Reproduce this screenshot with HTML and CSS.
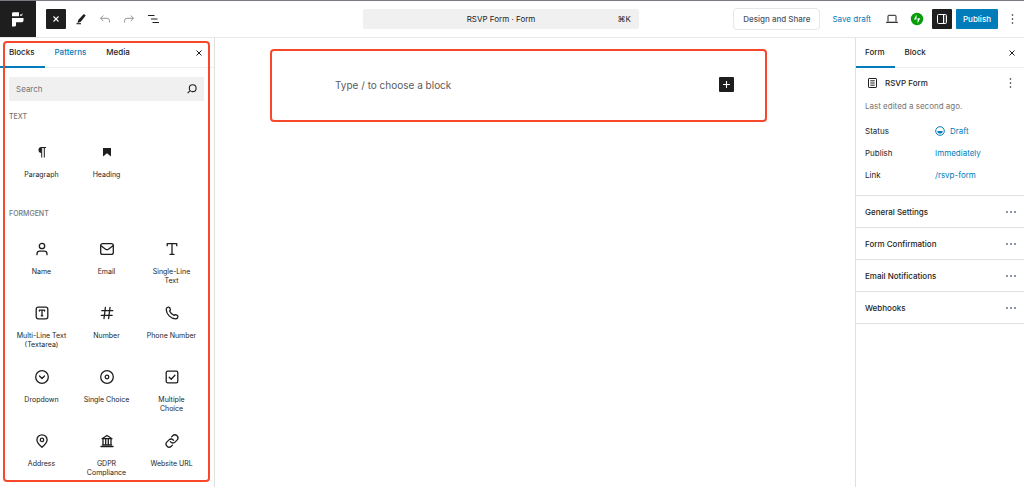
FILE: index.html
```
<!DOCTYPE html>
<html lang="en">
<head>
  <meta charset="UTF-8">
  <meta name="viewport" content="width=device-width, initial-scale=1.0">
  <title>RSVP Form</title>
  <link rel="stylesheet" href="styles.css">
</head>
<body>
  <header class="topbar">
    <div class="topbar-left">
      <a class="logo" href="#" aria-label="Dashboard">
        <svg width="36" height="36" viewBox="0 0 36 36" fill="#fff"><path d="M13.200 11.200h5.800v4h-7v-2.800a1.200 1.200 0 0 1 1.200-1.200zM12 17h11.500v2.600a1.600 1.600 0 0 1-1.600 1.600H16v3a1.400 1.400 0 0 1-1.400 1.400H12zM20 13.200l1.200.6 1.600-1.600-.600 2-1 .8-1.200-.6z"/></svg>
      </a>
      <button class="square-btn close-inserter" type="button" aria-label="Close inserter">
        <svg width="14" height="14" viewBox="0 0 14 14" fill="none" stroke="currentColor" stroke-width="1.1"><path d="M4.500 4.500l5 5M9.500 4.500l-5 5"/></svg>
      </button>
      <button class="tool-btn" type="button" aria-label="Tools">
        <svg width="14" height="14" viewBox="0 0 14 14"><path d="M9.800 2l1.900 1.600-4.900 6.200-3.300 1.200.9-3.200z" fill="#1e1e1e"/><path d="M2.500 11.700h4.500" stroke="#1e1e1e" stroke-width="1.100"/></svg>
      </button>
      <button class="tool-btn muted" type="button" aria-label="Undo">
        <svg width="14" height="14" viewBox="0 0 14 14" fill="none" stroke="currentColor"><path d="M5.300 3.500L2.500 6.300l2.800 2.800M2.500 6.300h6.300q2.700 0 2.700 2.400v1.800"/></svg>
      </button>
      <button class="tool-btn muted" type="button" aria-label="Redo">
        <svg width="14" height="14" viewBox="0 0 14 14" fill="none" stroke="currentColor"><path d="M8.700 3.500l2.800 2.800-2.800 2.800M11.500 6.300H5.200q-2.700 0-2.700 2.400v1.800"/></svg>
      </button>
      <button class="tool-btn" type="button" aria-label="Document overview">
        <svg width="14" height="14" viewBox="0 0 14 14" fill="none" stroke="#1e1e1e" stroke-width="1.100"><path d="M2 3.500h6.500M5 7h6.500M6.500 10.500h6.500"/></svg>
      </button>
    </div>
    <button class="command-bar" type="button">
      <span></span>
      <span>RSVP Form · Form</span>
      <span class="shortcut">⌘K</span>
    </button>
    <div class="topbar-right">
      <button class="design-btn" type="button">Design and Share</button>
      <button class="save-btn" type="button">Save draft</button>
      <button class="tool-btn" type="button" aria-label="Preview">
        <svg width="14" height="14" viewBox="0 0 14 14" fill="none" stroke="#1e1e1e"><path d="M3 9.500V4q0-.7.700-.7h6.600q.7 0 .7.700v5.500"/><path d="M1.200 10.300h11.600" stroke-width="1.200"/></svg>
      </button>
      <button class="tool-btn" type="button" aria-label="Jetpack">
        <svg width="14" height="14" viewBox="0 0 14 14"><circle cx="7" cy="7" r="6.200" fill="#069e08"/><path d="M6.500 2.400v5.200H3.900zM7.600 11.500V6.300h2.600z" fill="#fff"/></svg>
      </button>
      <button class="square-btn" type="button" aria-label="Settings">
        <svg width="14" height="14" viewBox="0 0 14 14" fill="none" stroke="#fff"><rect x="2.500" y="2.500" width="9" height="9" rx="1"/><path d="M8.500 2.500v9"/><path d="M10 3v8" stroke-opacity=".4"/></svg>
      </button>
      <button class="publish-btn" type="button">Publish</button>
      <button class="tool-btn" type="button" aria-label="Options">
        <svg width="14" height="14" viewBox="0 0 14 14" fill="#1e1e1e"><circle cx="7.500" cy="3" r=".8"/><circle cx="7.500" cy="7" r=".8"/><circle cx="7.500" cy="11" r=".8"/></svg>
      </button>
    </div>
  </header>

  <div class="editor">
    <aside class="inserter">
      <div class="tabs">
        <button class="tab active" type="button">Blocks</button>
        <button class="tab blue" type="button">Patterns</button>
        <button class="tab" type="button">Media</button>
        <button class="tool-btn tabs-close" type="button" aria-label="Close">
          <svg width="14" height="14" viewBox="0 0 14 14" fill="none" stroke="#1e1e1e"><path d="M4.500 4.500l5 5M9.500 4.500l-5 5"/></svg>
        </button>
      </div>
      <div class="inserter-body">
        <div class="search">
          <input type="search" placeholder="Search" aria-label="Search">
          <svg width="12" height="12" viewBox="0 0 12 12" fill="none" stroke="#1e1e1e" stroke-width="1.100"><circle cx="6.700" cy="5.200" r="3.400"/><path d="M4.200 7.700L1.600 10.200"/></svg>
        </div>

        <h2 class="group-title">TEXT</h2>
        <div class="blocks">
          <button class="block" type="button">
            <svg width="16" height="16" viewBox="0 0 16 16"><path d="M7.500 3a3 3 0 0 0 0 6z" fill="#1e1e1e"/><path d="M7 3.500h5M7.700 3.500v10M10.300 3.500v10" stroke="#1e1e1e" fill="none"/></svg>
            <span>Paragraph</span>
          </button>
          <button class="block" type="button">
            <svg width="16" height="16" viewBox="0 0 16 16" fill="#1e1e1e"><path d="M4 4h8v8.500L8 9.300l-4 3.200z"/></svg>
            <span>Heading</span>
          </button>
        </div>

        <h2 class="group-title">FORMGENT</h2>
        <div class="blocks">
          <button class="block" type="button">
            <svg class="line" width="16" height="16" viewBox="0 0 16 16"><circle cx="8" cy="5" r="2.700"/><path d="M3 13.700v-.8q0-2.700 2.700-2.700h4.600q2.700 0 2.700 2.700v.8"/></svg>
            <span>Name</span>
          </button>
          <button class="block" type="button">
            <svg class="line" width="16" height="16" viewBox="0 0 16 16"><rect x="1.700" y="2.600" width="12.600" height="10.800" rx="2"/><path d="M2 4.800l4.600 3.400q1.400 1 2.800 0L14 4.800"/></svg>
            <span>Email</span>
          </button>
          <button class="block" type="button">
            <svg class="line" width="16" height="16" viewBox="0 0 16 16"><path d="M3.200 4.800V2.700h9.600v2.100M8 2.700v10.600M6 13.300h4"/></svg>
            <span>Single-Line Text</span>
          </button>
          <button class="block" type="button">
            <svg class="line" width="16" height="16" viewBox="0 0 16 16"><rect x="2.200" y="2.200" width="11.600" height="11.600" rx="2"/><path d="M5.400 6V5.200h5.200V6M8 5.200v5.600M7.200 10.800h1.600"/></svg>
            <span>Multi-Line Text (Textarea)</span>
          </button>
          <button class="block" type="button">
            <svg class="line" width="16" height="16" viewBox="0 0 16 16"><path d="M2.800 5.700h11M2.200 10.300h11M6.400 2.500L5 13.500M11 2.500L9.600 13.500"/></svg>
            <span>Number</span>
          </button>
          <button class="block" type="button">
            <svg class="line" width="16" height="16" viewBox="0 0 16 16"><path d="M5.600 5.900a9 9 0 0 0 4.500 4.500q.7-.9 1.400-.8l1.800.7q.8.5.6 1.500-.4 2-2.100 2A10 10 0 0 1 2.200 4.200q0-1.700 2-2.100 1-.2 1.500.6l.7 1.800q.1.700-.8 1.400z"/></svg>
            <span>Phone Number</span>
          </button>
          <button class="block" type="button">
            <svg class="line" width="16" height="16" viewBox="0 0 16 16"><circle cx="8" cy="8" r="6.300"/><path d="M5.500 7L8 9.500 10.500 7"/></svg>
            <span>Dropdown</span>
          </button>
          <button class="block" type="button">
            <svg class="line" width="16" height="16" viewBox="0 0 16 16"><circle cx="8" cy="8" r="6.300"/><circle cx="8" cy="8" r="1.800"/></svg>
            <span>Single Choice</span>
          </button>
          <button class="block" type="button">
            <svg class="line" width="16" height="16" viewBox="0 0 16 16"><rect x="2.200" y="2.200" width="11.600" height="11.600" rx="1.600"/><path d="M5.200 8.200l2 2 3.700-4"/></svg>
            <span>Multiple Choice</span>
          </button>
          <button class="block" type="button">
            <svg class="line" width="16" height="16" viewBox="0 0 16 16"><path d="M8 14.300C5.600 12.100 2.900 9.900 2.900 6.900a5.100 5.100 0 0 1 10.200 0c0 3-2.700 5.200-5.100 7.400z"/><circle cx="8" cy="6.900" r="1.700"/></svg>
            <span>Address</span>
          </button>
          <button class="block" type="button">
            <svg class="line" width="16" height="16" viewBox="0 0 16 16"><path d="M2 13.500h12M3.500 11.800h9M3 5.700h10L8 2.500z"/><path d="M4 6v5.500M6.700 6v5.500M9.300 6v5.500M12 6v5.500"/></svg>
            <span>GDPR Compliance</span>
          </button>
          <button class="block" type="button">
            <svg class="line" width="16" height="16" viewBox="0 0 16 16"><path d="M6.400 8.700a3 3 0 0 0 4.600.4l2-2a3 3 0 0 0-4.300-4.300L7.600 3.900"/><path d="M9.600 7.300a3 3 0 0 0-4.600-.4l-2 2a3 3 0 0 0 4.300 4.300l1.100-1.100"/></svg>
            <span>Website URL</span>
          </button>
        </div>
      </div>
      <div class="highlight"></div>
    </aside>

    <main class="canvas">
      <div class="empty-block">
        <p>Type / to choose a block</p>
        <button class="add-btn" type="button" aria-label="Add block">
          <svg width="15" height="15" viewBox="0 0 15 15" stroke="#fff" stroke-width="1.100"><path d="M7.500 4v7M4 7.500h7"/></svg>
        </button>
      </div>
    </main>

    <aside class="settings">
      <div class="tabs">
        <button class="tab active" type="button">Form</button>
        <button class="tab" type="button">Block</button>
        <button class="tool-btn tabs-close" type="button" aria-label="Close settings">
          <svg width="14" height="14" viewBox="0 0 14 14" fill="none" stroke="#1e1e1e"><path d="M4.500 4.500l5 5M9.500 4.500l-5 5"/></svg>
        </button>
      </div>
      <section class="summary">
        <div class="summary-head">
          <svg width="14" height="14" viewBox="0 0 14 14" fill="none" stroke="#1e1e1e"><rect x="3.500" y="2.500" width="8" height="9" rx=".6"/><path d="M5.300 4.800h4.400M5.300 7h4.400M5.300 9.200h4.400"/></svg>
          <h2>RSVP Form</h2>
          <button class="tool-btn" type="button" aria-label="Actions">
            <svg width="14" height="14" viewBox="0 0 14 14" fill="#1e1e1e"><circle cx="7.500" cy="3" r=".8"/><circle cx="7.500" cy="7" r=".8"/><circle cx="7.500" cy="11" r=".8"/></svg>
          </button>
        </div>
        <p class="edited">Last edited a second ago.</p>
        <div class="row">
          <span>Status</span>
          <button class="value" type="button">
            <svg width="10" height="10" viewBox="0 0 10 10"><circle cx="5" cy="5" r="4.300" fill="none" stroke="#007cba"/><path d="M2.400 5h5.200a2.600 2.600 0 0 1-5.200 0z" fill="#007cba"/></svg>
            Draft
          </button>
        </div>
        <div class="row">
          <span>Publish</span>
          <button class="value" type="button">Immediately</button>
        </div>
        <div class="row">
          <span>Link</span>
          <a class="value" href="#">/rsvp-form</a>
        </div>
      </section>
      <button class="panel" type="button">General Settings <span class="dots"><i></i><i></i><i></i></span></button>
      <button class="panel" type="button">Form Confirmation <span class="dots"><i></i><i></i><i></i></span></button>
      <button class="panel" type="button">Email Notifications <span class="dots"><i></i><i></i><i></i></span></button>
      <button class="panel" type="button">Webhooks <span class="dots"><i></i><i></i><i></i></span></button>
    </aside>
  </div>
</body>
</html>
```
FILE: styles.css
```
* {
  box-sizing: border-box;
}

body {
  margin: 0;
  height: 100vh;
  display: flex;
  flex-direction: column;
  overflow: hidden;
  background: #fff;
  color: #1e1e1e;
  font-family: Inter, "Liberation Sans", sans-serif;
  font-size: 8px;
  line-height: 12px;
}

button,
input {
  font: inherit;
  color: inherit;
  margin: 0;
  padding: 0;
  border: none;
  background: none;
}

button {
  cursor: pointer;
}

h2,
p {
  margin: 0;
  font-size: 8px;
  font-weight: 500;
}

svg {
  display: block;
  flex: none;
}

/* Top bar */
.topbar {
  flex: none;
  display: grid;
  grid-template-columns: 1fr 276px 385px;
  align-items: center;
  height: 38px;
  border-top: 1px solid #7c7a82;
  border-bottom: 1px solid #e8e8e8;
}

.topbar-left,
.topbar-right {
  display: flex;
  align-items: center;
}

.topbar-left {
  gap: 10px;
}

.logo {
  background: #1e1e1e;
}

.tool-btn {
  width: 14px;
  height: 14px;
}

.muted {
  color: #949494;
}

.square-btn {
  display: flex;
  align-items: center;
  justify-content: center;
  width: 20px;
  height: 20px;
  border-radius: 1px;
  background: #1e1e1e;
  color: #fff;
}

.close-inserter {
  margin-right: -2px;
}

.command-bar {
  display: grid;
  grid-template-columns: 1fr auto 1fr;
  align-items: center;
  height: 20px;
  padding: 0 8px;
  border-radius: 2px;
  background: #f0f0f0;
}

.shortcut {
  text-align: right;
}

.topbar-right {
  justify-content: flex-end;
  padding-right: 5px;
}

.design-btn {
  height: 22px;
  padding: 0 9px;
  margin-right: 12px;
  border: 1px solid #e5e7eb;
  border-radius: 4px;
  color: #4b5563;
  font-weight: 500;
}

.save-btn {
  margin-right: 14px;
  color: #007cba;
}

.topbar-right .tool-btn {
  margin-right: 11px;
}

.topbar-right .tool-btn + .square-btn {
  margin-left: -3px;
  margin-right: 4px;
}

.publish-btn {
  height: 20px;
  padding: 0 7px;
  margin-right: 7px;
  border-radius: 1px;
  background: #007cba;
  color: #fff;
  font-weight: 500;
}

.topbar-right .tool-btn:last-child {
  margin-right: 0;
}

/* Columns */
.editor {
  flex: 1;
  min-height: 0;
  display: flex;
}

.inserter {
  position: relative;
  flex: none;
  width: 215px;
  border-right: 1px solid #e0e0e0;
}

.tabs {
  display: flex;
  align-items: center;
  height: 30px;
  border-bottom: 1px solid #eee;
}

.tab {
  height: 30px;
  padding: 0 10px;
  border-bottom: 2px solid transparent;
  font-weight: 500;
}

.tab:first-child {
  padding-left: 9px;
}

.tab.active {
  border-bottom-color: #007cba;
}

.tab.blue {
  color: #007cba;
}

.tabs-close {
  margin-left: auto;
  margin-right: 8px;
}

.settings .tabs-close {
  margin-right: 5px;
}

.inserter-body {
  padding: 9px 10px 0 9px;
}

.search {
  display: flex;
  align-items: center;
  height: 24px;
  padding: 0 6px 0 7px;
  border-radius: 1px;
  background: #f0f0f0;
}

.search input {
  flex: 1;
  min-width: 0;
  outline: none;
}

.search input::placeholder {
  color: #757575;
}

.group-title {
  margin: 10px 0 17px;
  color: #757575;
  font-size: 7px;
}

.blocks + .group-title {
  margin-top: 4px;
}

.blocks {
  display: grid;
  grid-template-columns: repeat(3, 1fr);
  grid-auto-rows: 64px;
}

.block {
  display: flex;
  flex-direction: column;
  align-items: center;
  gap: 10px;
  padding: 4px 7px 0;
  font-size: 7px;
  line-height: 9px;
}

.line {
  fill: none;
  stroke: #1e1e1e;
  stroke-width: 1.3;
  stroke-linecap: round;
  stroke-linejoin: round;
}

/* Marked areas */
.highlight {
  position: absolute;
  inset: 3px 4px 5px 3px;
  border: 2px solid #f8482c;
  border-radius: 4px;
  pointer-events: none;
}

.canvas {
  flex: 1;
  padding: 11px 88px 0 55px;
}

.empty-block {
  display: flex;
  align-items: center;
  justify-content: space-between;
  height: 73px;
  padding: 0 31px 2px 63px;
  border: 2px solid #f8482c;
  border-radius: 4px;
}

.empty-block p {
  color: #5c5c5c;
  font-size: 10px;
  font-weight: 400;
}

.add-btn {
  border-radius: 1px;
  background: #1e1e1e;
}

/* Settings sidebar */
.settings {
  flex: none;
  width: 169px;
  border-left: 1px solid #e0e0e0;
}

.summary {
  display: flex;
  flex-direction: column;
  gap: 10px;
  padding: 8px 7px 14px 9px;
}

.summary-head {
  display: flex;
  align-items: center;
  gap: 6px;
}

.summary-head .tool-btn {
  margin-left: auto;
}

.edited {
  margin-bottom: 3px;
  color: #757575;
  font-weight: 400;
}

.row {
  display: grid;
  grid-template-columns: 70px 1fr;
}

.value {
  display: flex;
  align-items: center;
  gap: 5px;
  color: #007cba;
  text-decoration: none;
}

.panel {
  display: flex;
  align-items: center;
  justify-content: space-between;
  width: 100%;
  height: 32px;
  padding: 0 8px 0 9px;
  border-top: 1px solid #e0e0e0;
  font-weight: 500;
}

.panel:last-child {
  height: 33px;
  border-bottom: 1px solid #e0e0e0;
}

.dots {
  display: flex;
  gap: 2px;
}

.dots i {
  width: 2px;
  height: 2px;
  border-radius: 50%;
  background: #64748b;
}
```
